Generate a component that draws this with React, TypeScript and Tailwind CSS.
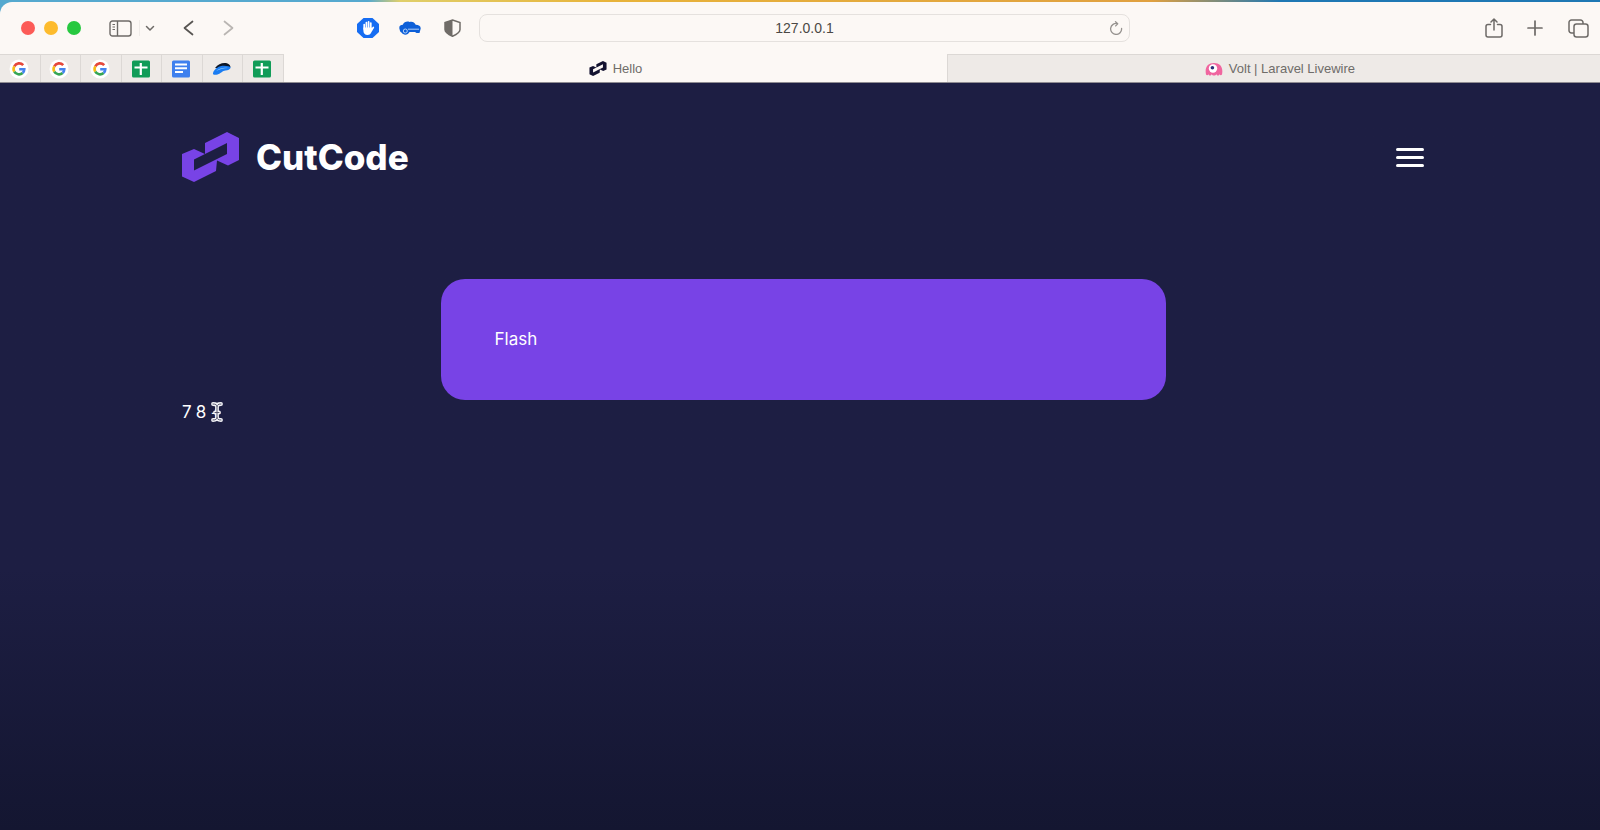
import type { ReactNode } from 'react'

type PinnedTab = {
  title: string
  icon: ReactNode
}

function GoogleIcon() {
  return (
    <svg viewBox="0 0 20 20" className="size-5">
      <circle cx="10" cy="10" r="9.5" fill="#fff" />
      <g fill="none" strokeWidth="2.6">
        <path d="M14.2 6.2A5.4 5.4 0 0 0 5.3 7.3" stroke="#e5483b" />
        <path d="M5.3 7.3A5.4 5.4 0 0 0 5.3 12.7" stroke="#f6bb18" />
        <path d="M5.3 12.7A5.4 5.4 0 0 0 13.6 14" stroke="#36a552" />
        <path d="M13.6 14A5.2 5.2 0 0 0 15.3 10.2H10.2" stroke="#4583ee" />
      </g>
    </svg>
  )
}

function SheetsIcon() {
  return (
    <svg viewBox="0 0 18 18" className="size-[18px]">
      <rect width="18" height="17" y="0.5" rx="1.5" fill="#119c58" />
      <path d="M2.5 7.5h13M8.8 3v12" stroke="#fff" strokeWidth="2.2" />
    </svg>
  )
}

function DocsIcon() {
  return (
    <svg viewBox="0 0 18 18" className="size-[18px]">
      <rect width="18" height="17" y="0.5" rx="1.5" fill="#3f80ee" />
      <path d="M3 4.6h12M3 8.3h12M3 12h8" stroke="#fff" strokeWidth="2" />
    </svg>
  )
}

function DolphinIcon() {
  return (
    <svg viewBox="0 0 20 14" className="h-[14px] w-5">
      <path d="M3 6C6 2 10 0.500 14 1c2 .3 4 1.500 4.500 4L12 7z" fill="#0c1626" />
      <path d="M1 11C2.500 6.500 7 3.800 12 3.800c3.500 0 6 .7 6.800 1.700C18 7.500 16 8.500 13.500 8.500c-3 0-4.500 3-8 4-2.700.7-5 .3-4.500-1.500z" fill="#1b7df2" />
      <path d="M4 9C8 5.800 12 5.200 16 6c-4 .3-8 1-12 3z" fill="#8accff" />
    </svg>
  )
}

function Mark({ className }: { className: string }) {
  return (
    <svg viewBox="0 0 57 50" className={className} fill="currentColor" fillRule="evenodd">
      <path d="M0 22L12 17L23 22V11L45 0L57 6V28L46 33.500L35 28.500L34 39L12 50L0 44.500ZM12 27.500V38.500L45 22V11Z" />
    </svg>
  )
}

function LivewireIcon() {
  return (
    <svg viewBox="0 0 18 14" className="h-[14px] w-[18px]">
      <path d="M1 12.500C-.5 5 3 1 9 1s9.500 4 8 11.500c-.8 1-2 .8-2.400-.3-.6 1.800-2.600 1.800-3.200 0-.7 1.800-4 1.800-4.800 0-.6 1.800-2.600 1.800-3.200 0C3 13.300 1.700 13.500 1 12.500z" fill="#f0659f" />
      <circle cx="8" cy="6.500" r="4.200" fill="#fff" />
      <circle cx="7.400" cy="5.700" r="1.800" fill="#2b3079" />
    </svg>
  )
}

function TextCursor() {
  return (
    <svg viewBox="0 0 12 20" className="absolute top-[2px] left-[29px] h-5 w-3" fill="none" strokeLinecap="round">
      <path d="M2 2c2.500 0 4 .8 4 2.500v11C6 17.200 4.500 18 2 18M10 2C7.500 2 6 2.800 6 4.500M6 15.500c0 1.700 1.500 2.500 4 2.500M4 10.500h4" stroke="#f4f4f8" strokeWidth="3.800" />
      <path d="M2 2c2.500 0 4 .8 4 2.500v11C6 17.200 4.500 18 2 18M10 2C7.500 2 6 2.800 6 4.500M6 15.500c0 1.700 1.500 2.500 4 2.500M4 10.500h4" stroke="#55566e" strokeWidth="1" />
    </svg>
  )
}

const pinnedTabs: PinnedTab[] = [
  { title: 'Google', icon: <GoogleIcon /> },
  { title: 'Google', icon: <GoogleIcon /> },
  { title: 'Google', icon: <GoogleIcon /> },
  { title: 'Sheets', icon: <SheetsIcon /> },
  { title: 'Docs', icon: <DocsIcon /> },
  { title: 'Dolphin', icon: <DolphinIcon /> },
  { title: 'Sheets', icon: <SheetsIcon /> },
]

function Toolbar() {
  return (
    <div className="flex h-[52px] items-center rounded-tl-xl bg-[#fcf8f5] text-[#6d6a67]">
      <div className="flex w-[479px] shrink-0 items-center pl-[21px]">
        <div className="flex gap-[9px]">
          <button aria-label="Close" className="size-[14px] rounded-full bg-[#fc5b57]" />
          <button aria-label="Minimize" className="size-[14px] rounded-full bg-[#fdbb2d]" />
          <button aria-label="Zoom" className="size-[14px] rounded-full bg-[#27c840]" />
        </div>
        <button aria-label="Sidebar" className="ml-7">
          <svg viewBox="0 0 23 17" className="h-[17px] w-[23px]" fill="none" stroke="currentColor" strokeWidth="1.4">
            <rect x="1" y="1" width="21" height="15" rx="2.500" />
            <path d="M8.500 1v15" />
            <path d="M3.500 4.500h2.500M3.500 7h2.500M3.500 9.500h2.500" strokeWidth="1" />
          </svg>
        </button>
        <div className="ml-[7px] h-4 w-px bg-[#efebe8]" />
        <button aria-label="Tab groups" className="ml-[5px]">
          <svg viewBox="0 0 10 10" className="size-[10px]" fill="none" stroke="currentColor" strokeWidth="1.5" strokeLinecap="round" strokeLinejoin="round">
            <path d="M1.500 3.500L5 7l3.500-3.500" />
          </svg>
        </button>
        <button aria-label="Back" className="ml-7">
          <svg viewBox="0 0 11 16" className="h-4 w-[11px]" fill="none" stroke="#575451" strokeWidth="1.7" strokeLinecap="round" strokeLinejoin="round">
            <path d="M9.500 1.500L1.500 8l8 6.500" />
          </svg>
        </button>
        <button aria-label="Forward" className="ml-[29px]">
          <svg viewBox="0 0 11 16" className="h-4 w-[11px]" fill="none" stroke="#b9b5b2" strokeWidth="1.7" strokeLinecap="round" strokeLinejoin="round">
            <path d="M1.500 1.500l8 6.500-8 6.500" />
          </svg>
        </button>
        <button aria-label="Ad blocker" className="ml-[123px]">
          <svg viewBox="0 0 22 20" className="h-5 w-[22px]">
            <path d="M6.500 0h9L22 6v8l-6.500 6h-9L0 14V6z" fill="#166df2" />
            <path d="M7.200 11V6.500M9.400 10V4.500M11.600 10V3.800M13.800 10.500V5M16.300 9.500l-2 3" stroke="#fff" strokeWidth="1.700" strokeLinecap="round" />
            <path d="M6.400 9.500h8.200l.8 2.500-1.400 3c-.7 1.300-1.700 1.900-3.400 1.900-2.700 0-4.200-1.600-4.200-4.200z" fill="#fff" />
          </svg>
        </button>
        <button aria-label="Passwords" className="ml-5">
          <svg viewBox="0 0 22 14" className="h-[14px] w-[22px]">
            <path d="M0.500 8C-.3 5 1.500 3.800 3.800 3.800 5 1 8 0 10.500 1c2.500-.8 5 0 6.200 2.800 3 0 5 1.200 5 3.700L20.500 12h-3L16 11h-5.500c-1.300 3-6 3.800-8 .5C1.200 11 .8 9.500.5 8z" fill="#0d5fd8" />
            <circle cx="6.300" cy="10" r="2" fill="none" stroke="#c4dbfb" strokeWidth="0.900" />
            <path d="M9 8.200h11" stroke="#c4dbfb" strokeWidth="0.900" />
          </svg>
        </button>
        <button aria-label="Privacy report" className="ml-[23px]">
          <svg viewBox="0 0 17 18" className="h-[18px] w-[17px]">
            <path d="M8.500 1L16 3.500v7c0 3-3.500 5-7.500 6.700C4.500 15.500 1 13.500 1 10.500v-7z" fill="none" stroke="#706c68" strokeWidth="1.500" />
            <path d="M8.500 1v16.200C4.500 15.500 1 13.500 1 10.500v-7z" fill="#706c68" />
          </svg>
        </button>
      </div>

      <div className="flex h-7 flex-1 items-center rounded-lg border border-[#e5e1de] pr-[6px] pl-5">
        <input
          aria-label="Address"
          className="w-full min-w-0 bg-transparent text-center text-sm text-[#4b4845] outline-none"
          defaultValue="127.0.0.1"
        />
        <button aria-label="Reload">
          <svg viewBox="0 0 14 14" className="size-[14px]" fill="none" stroke="#96928f" strokeWidth="1.300" strokeLinecap="round" strokeLinejoin="round">
            <path d="M12.600 7.500A5.500 5.500 0 1 1 8.500 2.600M6.500 .7l2.200 2-2 2.200" />
          </svg>
        </button>
      </div>

      <div className="flex w-[470px] shrink-0 items-center justify-end pr-[11px]">
        <button aria-label="Share">
          <svg viewBox="0 0 18 20" className="h-5 w-[18px]" fill="none" stroke="currentColor" strokeWidth="1.500" strokeLinecap="round" strokeLinejoin="round">
            <path d="M5.500 6.500H3A2 2 0 0 0 1 8.500V17a2 2 0 0 0 2 2h12a2 2 0 0 0 2-2V8.500a2 2 0 0 0-2-2h-2.500M9 12V1.200M6 4l3-3 3 3" />
          </svg>
        </button>
        <button aria-label="New tab" className="ml-[24px]">
          <svg viewBox="0 0 16 16" className="size-4" fill="none" stroke="currentColor" strokeWidth="1.700" strokeLinecap="round">
            <path d="M8 1v14M1 8h14" />
          </svg>
        </button>
        <button aria-label="Tab overview" className="ml-[25px]">
          <svg viewBox="0 0 21 19" className="h-[19px] w-[21px]" fill="none" stroke="currentColor" strokeWidth="1.500">
            <rect x="6" y="5" width="14" height="13" rx="2.500" />
            <path d="M6 14H3.500A2.500 2.500 0 0 1 1 11.500v-8A2.500 2.500 0 0 1 3.500 1h9A2.500 2.500 0 0 1 15 3.500V5" />
          </svg>
        </button>
      </div>
    </div>
  )
}

function TabBar() {
  return (
    <div className="flex h-[29px] border-b border-[#8f8c92] bg-[#fcf8f5] text-[13px] text-[#6f6c69]">
      <div className="flex w-[284px] shrink-0">
        {pinnedTabs.map((tab, i) => (
          <button
            key={i}
            aria-label={tab.title}
            className="flex flex-1 items-center justify-center border-t border-r border-[#dcd8d5] bg-[#eeeae7] pr-[2px]"
          >
            {tab.icon}
          </button>
        ))}
      </div>
      <button className="flex flex-[670] items-center justify-center gap-[6px] border-t border-transparent">
        <Mark className="h-[15px] w-[18px] text-[#131230]" />
        Hello
      </button>
      <button className="flex flex-[647] items-center justify-center gap-[6px] border-t border-l border-[#dcd8d5] bg-[#eeeae7] pl-3">
        <LivewireIcon />
        Volt | Laravel Livewire
      </button>
    </div>
  )
}

function App() {
  return (
    <div className="flex min-h-screen flex-col bg-[#1d1e43] font-['Liberation_Sans',sans-serif]">
      <div className="bg-[linear-gradient(to_right,#55a9cf_23%,#e0cf6a_25%,#e8b33a_38%,#e0a040_72%,#1f78b4_80%)] pt-[2px]">
        <Toolbar />
      </div>
      <TabBar />

      <div className="flex-1 bg-linear-to-b from-[#1d1e43] from-65% to-[#141631] pl-[6px] font-['Inter',sans-serif] text-white">
        <div className="mx-auto max-w-[1242px]">
          <header className="flex items-center justify-between pt-12">
            <a href="#" className="flex items-center gap-[17px]">
              <Mark className="h-[50px] w-[57px] text-[#7843e6]" />
              <span className="text-[35px] leading-[52px] font-extrabold">CutCode</span>
            </a>
            <button aria-label="Menu" className="flex w-7 flex-col gap-[5px]">
              <span className="h-[3px] rounded-full bg-white" />
              <span className="h-[3px] rounded-full bg-white" />
              <span className="h-[3px] rounded-full bg-white" />
            </button>
          </header>

          <main className="pt-24 text-[17px] leading-6">
            <div className="mx-auto max-w-[725px] rounded-3xl bg-[#7843e6] px-[54px] pt-12 pb-[49px]">
              Flash
            </div>
            <div className="relative flex items-center gap-1">
              <span>7</span>
              <span>8</span>
              <button aria-label="Increment">+</button>
              <TextCursor />
            </div>
          </main>
        </div>
      </div>
    </div>
  )
}

export default App
